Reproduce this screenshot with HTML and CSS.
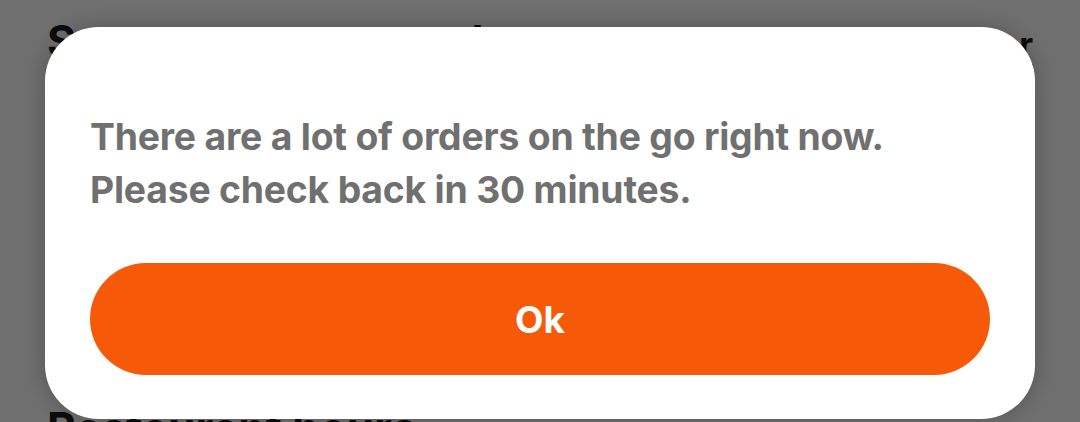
FILE: index.html
```html
<!DOCTYPE html>
<html lang="en">
<head>
<meta charset="utf-8">
<link rel="stylesheet" href="styles.css">
</head>
<body>
<div class="page">
  <div class="page-head">
    <h1 class="page-title">Some new menu orders</h1>
    <a class="page-link">Change order</a>
  </div>
  <h2 class="page-sub">Restaurant hours</h2>
</div>
<div class="overlay"></div>
<div class="modal">
  <p class="modal-text">There are a lot of orders on the go right now.<br>Please check back in 30 minutes.</p>
  <button class="modal-btn">Ok</button>
</div>
</body>
</html>
```
FILE: styles.css
```css
html, body {
  margin: 0;
  padding: 0;
  width: 1080px;
  height: 422px;
  overflow: hidden;
  font-family: "Inter", "Lato", sans-serif;
}
body {
  background: #ffffff;
  position: relative;
}
.page {
  padding: 14px 47px 0 47px;
  color: #1c1c1c;
}
.page-head {
  display: flex;
  justify-content: space-between;
  align-items: baseline;
}
.page-title {
  margin: 0;
  font-size: 44px;
  font-weight: 700;
}
.page-link {
  font-size: 34px;
  font-weight: 700;
  text-decoration: underline;
  text-underline-offset: 7px;
}
.page-sub {
  margin: 333px 0 0;
  font-size: 44px;
  font-weight: 700;
}
.overlay {
  position: absolute;
  inset: 0;
  background: rgba(0, 0, 0, 0.56);
}
.modal {
  position: absolute;
  left: 45px;
  top: 27px;
  width: 990px;
  height: 392px;
  box-sizing: border-box;
  background: #ffffff;
  border-radius: 54px;
  padding: 83px 45px 0 45px;
  box-shadow: 0 0 24px rgba(0, 0, 0, 0.25);
}
.modal-text {
  margin: 0;
  color: #707070;
  font-size: 37.3px;
  font-weight: 700;
  line-height: 53px;
  letter-spacing: -0.2px;
}
.modal-btn {
  display: block;
  margin-top: 47px;
  width: 900px;
  height: 112px;
  border: none;
  border-radius: 56px;
  background: #f65a08;
  color: #ffffff;
  font-family: inherit;
  font-size: 37px;
  font-weight: 700;
}
```
